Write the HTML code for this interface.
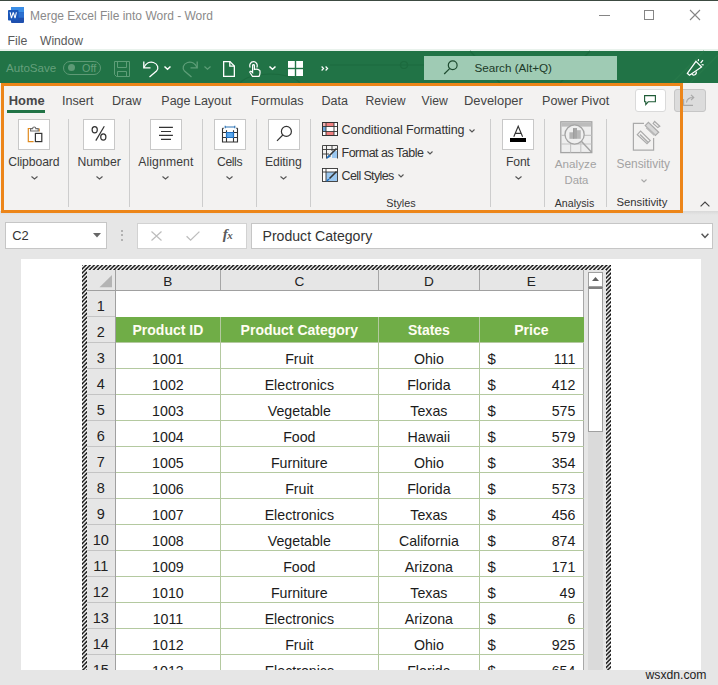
<!DOCTYPE html>
<html><head><meta charset="utf-8">
<style>
*{margin:0;padding:0;box-sizing:border-box}
html,body{width:718px;height:685px;overflow:hidden;background:#e6e6e6;font-family:"Liberation Sans",sans-serif}
.a{position:absolute}
.t{position:absolute;white-space:nowrap;line-height:1}
svg{position:absolute;overflow:visible}
</style></head><body>
<!-- title bar -->
<div class="a" style="left:0;top:0;width:718px;height:51px;background:#fff"></div>
<div class="a" style="left:0;top:0;width:718px;height:1px;background:#3c4a41"></div>
<div class="a" style="left:0;top:49px;width:718px;height:2px;background:#e9f2ec"></div>
<!-- word icon -->
<svg style="left:8px;top:7px" width="16" height="16" viewBox="0 0 16 16">
 <rect x="3" y="0" width="13" height="16" rx="1" fill="#1e4fae"/>
 <rect x="3" y="0" width="13" height="5.3" fill="#3a8ee6"/>
 <rect x="3" y="5.3" width="13" height="5.4" fill="#2b6fd0"/>
 <rect x="0" y="3" width="10.5" height="10.5" rx="0.8" fill="#1a56b8"/>
 <path d="M1.6 5.3L2.9 11.2H4L5.25 6.9L6.5 11.2H7.6L8.9 5.3H7.8L7 9.2L5.8 5.3H4.7L3.5 9.2L2.7 5.3Z" fill="#fff"/>
</svg>
<div class="t" style="left:30px;top:9.8px;font-size:12px;color:#8a8a8a">Merge Excel File into Word - Word</div>
<div class="t" style="left:7.5px;top:34.8px;font-size:12.3px;color:#5a5a5a">File</div>
<div class="t" style="left:40px;top:34.8px;font-size:12.1px;color:#5a5a5a">Window</div>
<!-- window controls -->
<div class="a" style="left:599px;top:15px;width:11px;height:1px;background:#858585"></div>
<div class="a" style="left:644px;top:10px;width:10px;height:10px;border:1px solid #858585"></div>
<svg style="left:690px;top:10px" width="10" height="10"><path d="M0 0L10 10M10 0L0 10" stroke="#858585" stroke-width="1.1"/></svg>


<!-- green toolbar -->
<div class="a" style="left:0;top:51px;width:718px;height:32px;background:#217346"></div>
<svg style="left:0;top:51px" width="718" height="32" viewBox="0 0 718 32" fill="none" stroke="#1c6a3e" stroke-width="1.2">
 <path d="M330 14H424"/><circle cx="404" cy="14" r="3.5"/><path d="M240 32C250 20 290 20 300 32" />
 <path d="M470 0L500 32M560 32L590 0"/><path d="M672 32L704 0M690 32L718 4" stroke="#267849" stroke-width="1.6"/>
</svg>
<div class="t" style="left:6px;top:62.3px;font-size:11.6px;color:#65a07c">AutoSave</div>
<div class="a" style="left:63px;top:60.5px;width:38px;height:14px;border:1.2px solid #5e9a76;border-radius:7px"></div>
<div class="a" style="left:67.5px;top:63.5px;width:7.5px;height:7.5px;background:#5e9a76;border-radius:50%"></div>
<div class="t" style="left:82px;top:63.3px;font-size:10.8px;color:#65a07c">Off</div>
<svg style="left:114px;top:61px" width="16" height="16" viewBox="0 0 16 16" fill="none" stroke="#5e9e78" stroke-width="1">
 <path d="M0.5 0.5H15.5V15.5H2.5L0.5 13.5Z"/><path d="M3.5 0.5V6.5H12.5V0.5"/><path d="M3.5 15.5V10.5H12.5V15.5"/>
</svg>
<svg style="left:142px;top:60px" width="18" height="18" viewBox="0 0 18 18" fill="none" stroke="#fff" stroke-width="1.3">
 <path d="M1.8 1.5V7.8H8.5"/><path d="M2 7.5C4 3 8 1.5 11.5 2.5C16 4 17 8.5 14.5 11L7.5 17"/>
</svg>
<svg style="left:164px;top:65.5px" width="7" height="4" viewBox="0 0 7 4"><path d="M0.5 0.5L3.5 3.2L6.5 0.5" stroke="#fff" stroke-width="1.5" fill="none"/></svg>
<svg style="left:182px;top:60px" width="18" height="18" viewBox="0 0 18 18" fill="none" stroke="#5e9e78" stroke-width="1.3">
 <path d="M15.2 1.5V7.8H8.5"/><path d="M15 7.5C13 3 9 1.5 5.5 2.5C1 4 0 8.5 2.5 11L9.5 17"/>
</svg>
<svg style="left:203.5px;top:65.5px" width="7" height="4" viewBox="0 0 7 4"><path d="M0.5 0.5L3.5 3.2L6.5 0.5" stroke="#5e9e78" stroke-width="1.2" fill="none"/></svg>
<svg style="left:223px;top:61px" width="12" height="16" viewBox="0 0 12 16" fill="none" stroke="#fff" stroke-width="1.3">
 <path d="M0.65 0.65H7L11.35 5V15.35H0.65Z"/><path d="M6.8 0.65V5.2H11.35"/>
</svg>
<svg style="left:249px;top:61px" width="12" height="16" viewBox="0 0 12 16" fill="none" stroke="#fff" stroke-width="1.2">
 <path d="M1.2 6.5C0 4 1.5 0.6 4.5 0.6C7.5 0.6 9 4 7.8 6.5"/><path d="M3.5 15.4L1 11.5C0.5 10.6 1.6 9.8 2.4 10.5L3.6 11.6V4.5C3.6 3.4 5.4 3.4 5.4 4.5V8.5C6.8 8 9 8.3 10.8 9.5C11.2 11 11 13.5 10 15.4Z"/>
</svg>
<svg style="left:269px;top:65.5px" width="7" height="4" viewBox="0 0 7 4"><path d="M0.5 0.5L3.5 3.2L6.5 0.5" stroke="#fff" stroke-width="1.5" fill="none"/></svg>
<svg style="left:288px;top:61px" width="15" height="15" viewBox="0 0 15 15" fill="#fff">
 <rect x="0" y="0" width="6.8" height="6.8"/><rect x="8.2" y="0" width="6.8" height="6.8"/><rect x="0" y="8.2" width="6.8" height="6.8"/><rect x="8.2" y="8.2" width="6.8" height="6.8"/>
</svg>
<svg style="left:320.5px;top:66px" width="9" height="5" viewBox="0 0 9 5" fill="none" stroke="#fff" stroke-width="1.2"><path d="M0.6 0.5L2.6 2.5L0.6 4.5M4.6 0.5L6.6 2.5L4.6 4.5"/></svg>
<!-- search box -->
<div class="a" style="left:424px;top:56px;width:193px;height:24px;background:#9fcbb4"></div>
<svg style="left:443px;top:60px" width="16" height="16" viewBox="0 0 16 16" fill="none" stroke="#1d4a2f" stroke-width="1.2">
 <circle cx="9.7" cy="5.3" r="4.4"/><path d="M6.6 8.6L1.2 14"/>
</svg>
<div class="t" style="left:474.4px;top:62.1px;font-size:11.7px;color:#1c3a28">Search (Alt+Q)</div>
<svg style="left:684px;top:58px" width="22" height="20" viewBox="0 0 22 20" fill="none" stroke="#fff" stroke-width="1.2">
 <path d="M12 3.3L17.6 9L5.5 17.3L3.3 15.3Z"/><path d="M7.8 15.7A2.3 2.3 0 0 0 12 13.6"/><path d="M14.2 3.2L14.6 1.2M16.6 5L19 2.2M17.6 6.7L19.7 6.8"/>
</svg>


<!-- formula bar -->
<div class="a" style="left:5px;top:222px;width:102px;height:26.5px;background:#fff;border:1px solid #c6c6c6"></div>
<div class="t" style="left:12.3px;top:229.88px;font-size:12.9px;color:#333;">C2</div>
<svg style="left:92.5px;top:232.5px" width="8" height="5" viewBox="0 0 8 5"><path d="M0 0H8L4 4.5Z" fill="#666"/></svg>
<div class="a" style="left:121px;top:229.5px;width:2px;height:2px;background:#a0a0a0;border-radius:1px"></div>
<div class="a" style="left:121px;top:234px;width:2px;height:2px;background:#a0a0a0;border-radius:1px"></div>
<div class="a" style="left:121px;top:238.5px;width:2px;height:2px;background:#a0a0a0;border-radius:1px"></div>
<div class="a" style="left:137px;top:222.5px;width:110px;height:26px;background:#fff;border:1px solid #d2d2d2"></div>
<svg style="left:150.5px;top:230.5px" width="11" height="10" viewBox="0 0 11 10"><path d="M0.5 0.5L10.5 9.5M10.5 0.5L0.5 9.5" stroke="#bdbdbd" stroke-width="1.2"/></svg>
<svg style="left:185.5px;top:230.5px" width="14" height="10" viewBox="0 0 14 10"><path d="M0.6 5.2L4.6 9.2L13.4 0.6" stroke="#bdbdbd" stroke-width="1.3" fill="none"/></svg>
<div class="t" style="left:222.8px;top:226.8px;font-family:'Liberation Serif',serif;font-style:italic;font-weight:bold;font-size:15px;color:#5a5a5a">f<span style="font-size:11px;position:relative;left:-0.5px;top:0.5px">x</span></div>
<div class="a" style="left:250.5px;top:222.5px;width:462px;height:26px;background:#fff;border:1px solid #c6c6c6"></div>
<div class="t" style="left:262.5px;top:229.26px;font-size:14.1px;color:#333;">Product Category</div>
<svg style="left:701px;top:232.5px" width="8" height="6" viewBox="0 0 8 6"><path d="M0.6 0.8L4 4.4L7.4 0.8" stroke="#555" stroke-width="1.5" fill="none"/></svg>

<!-- page -->
<div class="a" style="left:20.5px;top:258.5px;width:680.5px;height:411.2px;background:#fff;overflow:hidden">
<div class="a" style="left:-20.5px;top:-258.5px;width:718px;height:685px">
<svg style="left:82px;top:265px" width="529" height="420" viewBox="0 0 529 420"><defs><pattern id="h" patternUnits="userSpaceOnUse" width="4.1" height="4.1"><rect width="4.1" height="4.1" fill="#fff"/><path d="M-1 1.05L1.05 -1M0 4.1L4.1 0M3.05 5.1L5.1 3.05" stroke="#000" stroke-width="1.35"/></pattern></defs><rect width="529" height="420" fill="url(#h)"/></svg>
<div class="a" style="left:87px;top:270px;width:519px;height:420px;background:#e6e6e6"></div>
<div class="a" style="left:115.5px;top:290.5px;width:468px;height:400px;background:#fff"></div>
<div class="t" style="left:115.5px;top:275.49px;width:104.80000000000001px;text-align:center;font-size:13.6px;color:#222">B</div>
<div class="t" style="left:220.3px;top:275.49px;width:158.09999999999997px;text-align:center;font-size:13.6px;color:#222">C</div>
<div class="t" style="left:378.4px;top:275.49px;width:101.0px;text-align:center;font-size:13.6px;color:#222">D</div>
<div class="t" style="left:479.4px;top:275.49px;width:104.0px;text-align:center;font-size:13.6px;color:#222">E</div>
<div class="a" style="left:219.8px;top:270px;width:1px;height:20.5px;background:#a6a6a6"></div>
<div class="a" style="left:377.9px;top:270px;width:1px;height:20.5px;background:#a6a6a6"></div>
<div class="a" style="left:478.9px;top:270px;width:1px;height:20.5px;background:#a6a6a6"></div>
<div class="a" style="left:87px;top:290px;width:497px;height:1px;background:#a0a0a0"></div>
<div class="a" style="left:115px;top:270px;width:1px;height:420px;background:#a0a0a0"></div>
<div class="a" style="left:583px;top:270px;width:1.2px;height:420px;background:#a8a8a8"></div>
<svg style="left:99px;top:274.5px" width="13" height="13" viewBox="0 0 13 13"><path d="M13 0V12.3H0.5Z" fill="#b4b4b4"/></svg>
<div class="a" style="left:115.5px;top:316.5px;width:468px;height:26px;background:#70ad47"></div>
<div class="t" style="left:86.5px;top:299.43px;width:28.5px;text-align:center;font-size:14.5px;color:#222">1</div>
<div class="t" style="left:86.5px;top:325.43px;width:28.5px;text-align:center;font-size:14.5px;color:#222">2</div>
<div class="a" style="left:87px;top:316.0px;width:28px;height:1px;background:#c4c4c4"></div>
<div class="t" style="left:115.5px;top:323.15px;width:104.80000000000001px;text-align:center;font-size:14px;font-weight:bold;color:#fffdf2">Product ID</div>
<div class="t" style="left:220.3px;top:323.15px;width:158.09999999999997px;text-align:center;font-size:14px;font-weight:bold;color:#fffdf2">Product Category</div>
<div class="t" style="left:378.4px;top:323.15px;width:101.0px;text-align:center;font-size:14px;font-weight:bold;color:#fffdf2">States</div>
<div class="t" style="left:479.4px;top:323.15px;width:104.0px;text-align:center;font-size:14px;font-weight:bold;color:#fffdf2">Price</div>
<div class="t" style="left:86.5px;top:351.43px;width:28.5px;text-align:center;font-size:14.5px;color:#222">3</div>
<div class="a" style="left:87px;top:342.0px;width:28px;height:1px;background:#c4c4c4"></div>
<div class="t" style="left:115.5px;top:351.78px;width:104.80000000000001px;text-align:center;font-size:14.2px;color:#1b1b1b">1001</div>
<div class="t" style="left:220.3px;top:351.78px;width:158.09999999999997px;text-align:center;font-size:14.2px;color:#1b1b1b">Fruit</div>
<div class="t" style="left:378.4px;top:351.78px;width:101.0px;text-align:center;font-size:14.2px;color:#1b1b1b">Ohio</div>
<div class="t" style="left:487.6px;top:351.40px;font-size:15px;color:#1b1b1b">$</div>
<div class="t" style="left:500px;top:351.78px;width:75.3px;text-align:right;font-size:14.2px;color:#1b1b1b">111</div>
<div class="a" style="left:115.5px;top:342.0px;width:468px;height:1px;background:#b4c9a0"></div>
<div class="t" style="left:86.5px;top:377.43px;width:28.5px;text-align:center;font-size:14.5px;color:#222">4</div>
<div class="a" style="left:87px;top:368.0px;width:28px;height:1px;background:#c4c4c4"></div>
<div class="t" style="left:115.5px;top:377.78px;width:104.80000000000001px;text-align:center;font-size:14.2px;color:#1b1b1b">1002</div>
<div class="t" style="left:220.3px;top:377.78px;width:158.09999999999997px;text-align:center;font-size:14.2px;color:#1b1b1b">Electronics</div>
<div class="t" style="left:378.4px;top:377.78px;width:101.0px;text-align:center;font-size:14.2px;color:#1b1b1b">Florida</div>
<div class="t" style="left:487.6px;top:377.40px;font-size:15px;color:#1b1b1b">$</div>
<div class="t" style="left:500px;top:377.78px;width:75.3px;text-align:right;font-size:14.2px;color:#1b1b1b">412</div>
<div class="a" style="left:115.5px;top:368.0px;width:468px;height:1px;background:#b4c9a0"></div>
<div class="t" style="left:86.5px;top:403.43px;width:28.5px;text-align:center;font-size:14.5px;color:#222">5</div>
<div class="a" style="left:87px;top:394.0px;width:28px;height:1px;background:#c4c4c4"></div>
<div class="t" style="left:115.5px;top:403.78px;width:104.80000000000001px;text-align:center;font-size:14.2px;color:#1b1b1b">1003</div>
<div class="t" style="left:220.3px;top:403.78px;width:158.09999999999997px;text-align:center;font-size:14.2px;color:#1b1b1b">Vegetable</div>
<div class="t" style="left:378.4px;top:403.78px;width:101.0px;text-align:center;font-size:14.2px;color:#1b1b1b">Texas</div>
<div class="t" style="left:487.6px;top:403.40px;font-size:15px;color:#1b1b1b">$</div>
<div class="t" style="left:500px;top:403.78px;width:75.3px;text-align:right;font-size:14.2px;color:#1b1b1b">575</div>
<div class="a" style="left:115.5px;top:394.0px;width:468px;height:1px;background:#b4c9a0"></div>
<div class="t" style="left:86.5px;top:429.43px;width:28.5px;text-align:center;font-size:14.5px;color:#222">6</div>
<div class="a" style="left:87px;top:420.0px;width:28px;height:1px;background:#c4c4c4"></div>
<div class="t" style="left:115.5px;top:429.78px;width:104.80000000000001px;text-align:center;font-size:14.2px;color:#1b1b1b">1004</div>
<div class="t" style="left:220.3px;top:429.78px;width:158.09999999999997px;text-align:center;font-size:14.2px;color:#1b1b1b">Food</div>
<div class="t" style="left:378.4px;top:429.78px;width:101.0px;text-align:center;font-size:14.2px;color:#1b1b1b">Hawaii</div>
<div class="t" style="left:487.6px;top:429.40px;font-size:15px;color:#1b1b1b">$</div>
<div class="t" style="left:500px;top:429.78px;width:75.3px;text-align:right;font-size:14.2px;color:#1b1b1b">579</div>
<div class="a" style="left:115.5px;top:420.0px;width:468px;height:1px;background:#b4c9a0"></div>
<div class="t" style="left:86.5px;top:455.43px;width:28.5px;text-align:center;font-size:14.5px;color:#222">7</div>
<div class="a" style="left:87px;top:446.0px;width:28px;height:1px;background:#c4c4c4"></div>
<div class="t" style="left:115.5px;top:455.78px;width:104.80000000000001px;text-align:center;font-size:14.2px;color:#1b1b1b">1005</div>
<div class="t" style="left:220.3px;top:455.78px;width:158.09999999999997px;text-align:center;font-size:14.2px;color:#1b1b1b">Furniture</div>
<div class="t" style="left:378.4px;top:455.78px;width:101.0px;text-align:center;font-size:14.2px;color:#1b1b1b">Ohio</div>
<div class="t" style="left:487.6px;top:455.40px;font-size:15px;color:#1b1b1b">$</div>
<div class="t" style="left:500px;top:455.78px;width:75.3px;text-align:right;font-size:14.2px;color:#1b1b1b">354</div>
<div class="a" style="left:115.5px;top:446.0px;width:468px;height:1px;background:#b4c9a0"></div>
<div class="t" style="left:86.5px;top:481.43px;width:28.5px;text-align:center;font-size:14.5px;color:#222">8</div>
<div class="a" style="left:87px;top:472.0px;width:28px;height:1px;background:#c4c4c4"></div>
<div class="t" style="left:115.5px;top:481.78px;width:104.80000000000001px;text-align:center;font-size:14.2px;color:#1b1b1b">1006</div>
<div class="t" style="left:220.3px;top:481.78px;width:158.09999999999997px;text-align:center;font-size:14.2px;color:#1b1b1b">Fruit</div>
<div class="t" style="left:378.4px;top:481.78px;width:101.0px;text-align:center;font-size:14.2px;color:#1b1b1b">Florida</div>
<div class="t" style="left:487.6px;top:481.40px;font-size:15px;color:#1b1b1b">$</div>
<div class="t" style="left:500px;top:481.78px;width:75.3px;text-align:right;font-size:14.2px;color:#1b1b1b">573</div>
<div class="a" style="left:115.5px;top:472.0px;width:468px;height:1px;background:#b4c9a0"></div>
<div class="t" style="left:86.5px;top:507.43px;width:28.5px;text-align:center;font-size:14.5px;color:#222">9</div>
<div class="a" style="left:87px;top:498.0px;width:28px;height:1px;background:#c4c4c4"></div>
<div class="t" style="left:115.5px;top:507.78px;width:104.80000000000001px;text-align:center;font-size:14.2px;color:#1b1b1b">1007</div>
<div class="t" style="left:220.3px;top:507.78px;width:158.09999999999997px;text-align:center;font-size:14.2px;color:#1b1b1b">Electronics</div>
<div class="t" style="left:378.4px;top:507.78px;width:101.0px;text-align:center;font-size:14.2px;color:#1b1b1b">Texas</div>
<div class="t" style="left:487.6px;top:507.40px;font-size:15px;color:#1b1b1b">$</div>
<div class="t" style="left:500px;top:507.78px;width:75.3px;text-align:right;font-size:14.2px;color:#1b1b1b">456</div>
<div class="a" style="left:115.5px;top:498.0px;width:468px;height:1px;background:#b4c9a0"></div>
<div class="t" style="left:86.5px;top:533.43px;width:28.5px;text-align:center;font-size:14.5px;color:#222">10</div>
<div class="a" style="left:87px;top:524.0px;width:28px;height:1px;background:#c4c4c4"></div>
<div class="t" style="left:115.5px;top:533.78px;width:104.80000000000001px;text-align:center;font-size:14.2px;color:#1b1b1b">1008</div>
<div class="t" style="left:220.3px;top:533.78px;width:158.09999999999997px;text-align:center;font-size:14.2px;color:#1b1b1b">Vegetable</div>
<div class="t" style="left:378.4px;top:533.78px;width:101.0px;text-align:center;font-size:14.2px;color:#1b1b1b">California</div>
<div class="t" style="left:487.6px;top:533.40px;font-size:15px;color:#1b1b1b">$</div>
<div class="t" style="left:500px;top:533.78px;width:75.3px;text-align:right;font-size:14.2px;color:#1b1b1b">874</div>
<div class="a" style="left:115.5px;top:524.0px;width:468px;height:1px;background:#b4c9a0"></div>
<div class="t" style="left:86.5px;top:559.43px;width:28.5px;text-align:center;font-size:14.5px;color:#222">11</div>
<div class="a" style="left:87px;top:550.0px;width:28px;height:1px;background:#c4c4c4"></div>
<div class="t" style="left:115.5px;top:559.78px;width:104.80000000000001px;text-align:center;font-size:14.2px;color:#1b1b1b">1009</div>
<div class="t" style="left:220.3px;top:559.78px;width:158.09999999999997px;text-align:center;font-size:14.2px;color:#1b1b1b">Food</div>
<div class="t" style="left:378.4px;top:559.78px;width:101.0px;text-align:center;font-size:14.2px;color:#1b1b1b">Arizona</div>
<div class="t" style="left:487.6px;top:559.40px;font-size:15px;color:#1b1b1b">$</div>
<div class="t" style="left:500px;top:559.78px;width:75.3px;text-align:right;font-size:14.2px;color:#1b1b1b">171</div>
<div class="a" style="left:115.5px;top:550.0px;width:468px;height:1px;background:#b4c9a0"></div>
<div class="t" style="left:86.5px;top:585.43px;width:28.5px;text-align:center;font-size:14.5px;color:#222">12</div>
<div class="a" style="left:87px;top:576.0px;width:28px;height:1px;background:#c4c4c4"></div>
<div class="t" style="left:115.5px;top:585.78px;width:104.80000000000001px;text-align:center;font-size:14.2px;color:#1b1b1b">1010</div>
<div class="t" style="left:220.3px;top:585.78px;width:158.09999999999997px;text-align:center;font-size:14.2px;color:#1b1b1b">Furniture</div>
<div class="t" style="left:378.4px;top:585.78px;width:101.0px;text-align:center;font-size:14.2px;color:#1b1b1b">Texas</div>
<div class="t" style="left:487.6px;top:585.40px;font-size:15px;color:#1b1b1b">$</div>
<div class="t" style="left:500px;top:585.78px;width:75.3px;text-align:right;font-size:14.2px;color:#1b1b1b">49</div>
<div class="a" style="left:115.5px;top:576.0px;width:468px;height:1px;background:#b4c9a0"></div>
<div class="t" style="left:86.5px;top:611.43px;width:28.5px;text-align:center;font-size:14.5px;color:#222">13</div>
<div class="a" style="left:87px;top:602.0px;width:28px;height:1px;background:#c4c4c4"></div>
<div class="t" style="left:115.5px;top:611.78px;width:104.80000000000001px;text-align:center;font-size:14.2px;color:#1b1b1b">1011</div>
<div class="t" style="left:220.3px;top:611.78px;width:158.09999999999997px;text-align:center;font-size:14.2px;color:#1b1b1b">Electronics</div>
<div class="t" style="left:378.4px;top:611.78px;width:101.0px;text-align:center;font-size:14.2px;color:#1b1b1b">Arizona</div>
<div class="t" style="left:487.6px;top:611.40px;font-size:15px;color:#1b1b1b">$</div>
<div class="t" style="left:500px;top:611.78px;width:75.3px;text-align:right;font-size:14.2px;color:#1b1b1b">6</div>
<div class="a" style="left:115.5px;top:602.0px;width:468px;height:1px;background:#b4c9a0"></div>
<div class="t" style="left:86.5px;top:637.43px;width:28.5px;text-align:center;font-size:14.5px;color:#222">14</div>
<div class="a" style="left:87px;top:628.0px;width:28px;height:1px;background:#c4c4c4"></div>
<div class="t" style="left:115.5px;top:637.78px;width:104.80000000000001px;text-align:center;font-size:14.2px;color:#1b1b1b">1012</div>
<div class="t" style="left:220.3px;top:637.78px;width:158.09999999999997px;text-align:center;font-size:14.2px;color:#1b1b1b">Fruit</div>
<div class="t" style="left:378.4px;top:637.78px;width:101.0px;text-align:center;font-size:14.2px;color:#1b1b1b">Ohio</div>
<div class="t" style="left:487.6px;top:637.40px;font-size:15px;color:#1b1b1b">$</div>
<div class="t" style="left:500px;top:637.78px;width:75.3px;text-align:right;font-size:14.2px;color:#1b1b1b">925</div>
<div class="a" style="left:115.5px;top:628.0px;width:468px;height:1px;background:#b4c9a0"></div>
<div class="t" style="left:86.5px;top:663.43px;width:28.5px;text-align:center;font-size:14.5px;color:#222">15</div>
<div class="a" style="left:87px;top:654.0px;width:28px;height:1px;background:#c4c4c4"></div>
<div class="t" style="left:115.5px;top:663.78px;width:104.80000000000001px;text-align:center;font-size:14.2px;color:#1b1b1b">1013</div>
<div class="t" style="left:220.3px;top:663.78px;width:158.09999999999997px;text-align:center;font-size:14.2px;color:#1b1b1b">Electronics</div>
<div class="t" style="left:378.4px;top:663.78px;width:101.0px;text-align:center;font-size:14.2px;color:#1b1b1b">Florida</div>
<div class="t" style="left:487.6px;top:663.40px;font-size:15px;color:#1b1b1b">$</div>
<div class="t" style="left:500px;top:663.78px;width:75.3px;text-align:right;font-size:14.2px;color:#1b1b1b">654</div>
<div class="a" style="left:115.5px;top:654.0px;width:468px;height:1px;background:#b4c9a0"></div>
<div class="a" style="left:219.8px;top:316.5px;width:1px;height:400px;background:#b4c9a0"></div>
<div class="a" style="left:377.9px;top:316.5px;width:1px;height:400px;background:#b4c9a0"></div>
<div class="a" style="left:478.9px;top:316.5px;width:1px;height:400px;background:#b4c9a0"></div>
<div class="a" style="left:588px;top:287px;width:15px;height:400px;background:#dadada"></div>
<div class="a" style="left:588px;top:272.3px;width:15px;height:15px;background:#fff;border:1px solid #a0a0a0"></div>
<svg style="left:592px;top:277px" width="7" height="4" viewBox="0 0 7 4"><path d="M0 4H7L3.5 0Z" fill="#606060"/></svg>
<div class="a" style="left:588px;top:286.5px;width:15px;height:145px;background:#fff;border:1px solid #a0a0a0;border-top:2px solid #808080"></div>
</div></div>
<div class="t" style="left:645.5px;top:669px;font-size:12.2px;color:#222">wsxdn.com</div>

<!-- ribbon -->
<div class="a" style="left:0;top:83px;width:718px;height:128px;background:#f3f2f1"></div>
<div class="a" style="left:0;top:211px;width:718px;height:4px;background:linear-gradient(#d8d8d8,#e6e6e6)"></div>
<div class="t" style="left:8.8px;top:94.78px;font-size:12.9px;color:#474747;font-weight:bold">Home</div>
<div class="t" style="left:62px;top:95.03px;font-size:12.6px;color:#444;">Insert</div>
<div class="t" style="left:112px;top:95.03px;font-size:12.6px;color:#444;">Draw</div>
<div class="t" style="left:161.3px;top:95.12px;font-size:12.5px;color:#444;">Page Layout</div>
<div class="t" style="left:251px;top:95.03px;font-size:12.6px;color:#444;">Formulas</div>
<div class="t" style="left:321.5px;top:95.12px;font-size:12.5px;color:#444;">Data</div>
<div class="t" style="left:365.5px;top:95.37px;font-size:12.2px;color:#444;">Review</div>
<div class="t" style="left:421.6px;top:95.37px;font-size:12.2px;color:#444;">View</div>
<div class="t" style="left:464px;top:94.78px;font-size:12.9px;color:#444;">Developer</div>
<div class="t" style="left:542px;top:95.03px;font-size:12.6px;color:#444;">Power Pivot</div>
<div class="a" style="left:7px;top:110px;width:38px;height:3px;background:#217346"></div>
<div class="a" style="left:635px;top:88.5px;width:31px;height:23px;background:#fff;border:1px solid #dadada;border-radius:3px"></div>
<svg style="left:644px;top:95px" width="12" height="11" viewBox="0 0 12 11" fill="none" stroke="#1e5b36" stroke-width="1.1"><path d="M0.6 0.6H11.4V6.8H4.2L1.8 9.6V6.8H0.6Z"/></svg>
<div class="a" style="left:674px;top:88.5px;width:32px;height:23px;background:#dcdcdc;border:1px solid #c6c6c6;border-radius:3px"></div>
<svg style="left:683px;top:94px" width="14" height="12" viewBox="0 0 14 12" fill="none" stroke="#a8a8a8" stroke-width="1.1"><path d="M0.6 5V11.4H10"/><path d="M3.5 8.5C4 5 6.5 3.5 10 3.5M8 0.8L10.8 3.5L8 6.2"/></svg>
<div class="a" style="left:18px;top:119px;width:32px;height:31px;background:#fff;border:1px solid #c8c8c8"></div>
<div class="a" style="left:83px;top:119px;width:32px;height:31px;background:#fff;border:1px solid #c8c8c8"></div>
<div class="a" style="left:150px;top:119px;width:32px;height:31px;background:#fff;border:1px solid #c8c8c8"></div>
<div class="a" style="left:214px;top:119px;width:32px;height:31px;background:#fff;border:1px solid #c8c8c8"></div>
<div class="a" style="left:268px;top:119px;width:32px;height:31px;background:#fff;border:1px solid #c8c8c8"></div>
<div class="a" style="left:502px;top:119px;width:32px;height:31px;background:#fff;border:1px solid #c8c8c8"></div>
<svg style="left:18px;top:119px" width="32" height="31" viewBox="0 0 32 31" fill="none">
 <path d="M13 9.5H10.3V22.6H15.6" stroke="#e08a1e" stroke-width="1.2"/><path d="M21.2 9.5V12.6" stroke="#e08a1e" stroke-width="1.2"/>
 <path d="M12.6 12V9.6H14.6C14.6 7.5 17.8 7.5 17.8 9.6H20.2V12Z" stroke="#6b6b6b" stroke-width="1.1"/>
 <rect x="17.4" y="14.4" width="6.4" height="8.2" stroke="#333" stroke-width="1.2"/>
</svg>
<svg style="left:83px;top:119px" width="32" height="31" viewBox="0 0 32 31" fill="none" stroke="#333" stroke-width="1.2">
 <ellipse cx="11.7" cy="10.8" rx="2.6" ry="3.1"/><ellipse cx="20.3" cy="18" rx="2.6" ry="3.1"/><path d="M21.3 7.2L12.8 21.6"/>
</svg>
<svg style="left:150px;top:119px" width="32" height="31" viewBox="0 0 32 31" fill="none" stroke="#333" stroke-width="1.2">
 <path d="M9 8.4H22.9M11 12.5H21M9 16.4H22.9M11 20.4H21"/>
</svg>
<svg style="left:214px;top:119px" width="32" height="31" viewBox="0 0 32 31" fill="none">
 <rect x="12.5" y="13.5" width="7" height="5" fill="#5aa9f0"/>
 <path d="M8.5 11V23H23.5V11M8.5 13.5H23.5M8.5 18.5H23.5M12.5 11.3V23M19.5 11.3V23M8.5 9.3H9.8M23.5 9.3H22.2M8.5 9.3V11M23.5 9.3V11" stroke="#333" stroke-width="1.1"/>
 <path d="M12.5 13.5H19.5V18.5H12.5Z" stroke="#1f6fc0" stroke-width="1.1"/>
 <path d="M11.2 8H20.8M11.2 6.8V9.3M20.8 6.8V9.3" stroke="#2e75b6" stroke-width="1.1"/>
</svg>
<svg style="left:268px;top:119px" width="32" height="31" viewBox="0 0 32 31" fill="none" stroke="#333" stroke-width="1.2">
 <circle cx="18.4" cy="12.4" r="5"/><path d="M14.8 16L9 21.8"/>
</svg>
<svg style="left:502px;top:119px" width="32" height="31" viewBox="0 0 32 31" fill="none">
 <path d="M11.8 17.8L16.2 7.2L20.6 17.8M13.2 14.4H19.2" stroke="#333" stroke-width="1.1"/>
 <rect x="8" y="19" width="16" height="4" fill="#000"/>
</svg>
<div class="t" style="left:8.2px;top:155.67px;font-size:12.2px;color:#3c3c3c;;letter-spacing:-0.1px">Clipboard</div>
<svg style="left:30.8px;top:176px" width="7" height="4" viewBox="0 0 7 4"><path d="M0.5 0.5L3.5 3L6.5 0.5" stroke="#555" stroke-width="1.1" fill="none"/></svg>
<div class="t" style="left:77.4px;top:155.67px;font-size:12.2px;color:#3c3c3c;">Number</div>
<svg style="left:95.5px;top:176px" width="7" height="4" viewBox="0 0 7 4"><path d="M0.5 0.5L3.5 3L6.5 0.5" stroke="#555" stroke-width="1.1" fill="none"/></svg>
<div class="t" style="left:138.2px;top:155.67px;font-size:12.2px;color:#3c3c3c;;letter-spacing:0.12px">Alignment</div>
<svg style="left:162px;top:176px" width="7" height="4" viewBox="0 0 7 4"><path d="M0.5 0.5L3.5 3L6.5 0.5" stroke="#555" stroke-width="1.1" fill="none"/></svg>
<div class="t" style="left:217px;top:155.67px;font-size:12.2px;color:#3c3c3c;;letter-spacing:-0.4px">Cells</div>
<svg style="left:226px;top:176px" width="7" height="4" viewBox="0 0 7 4"><path d="M0.5 0.5L3.5 3L6.5 0.5" stroke="#555" stroke-width="1.1" fill="none"/></svg>
<div class="t" style="left:265px;top:155.67px;font-size:12.2px;color:#3c3c3c;;letter-spacing:-0.1px">Editing</div>
<svg style="left:280px;top:176px" width="7" height="4" viewBox="0 0 7 4"><path d="M0.5 0.5L3.5 3L6.5 0.5" stroke="#555" stroke-width="1.1" fill="none"/></svg>
<div class="t" style="left:506px;top:155.67px;font-size:12.2px;color:#3c3c3c;;letter-spacing:-0.15px">Font</div>
<svg style="left:515px;top:176px" width="7" height="4" viewBox="0 0 7 4"><path d="M0.5 0.5L3.5 3L6.5 0.5" stroke="#555" stroke-width="1.1" fill="none"/></svg>
<div class="a" style="left:68.0px;top:119px;width:1px;height:88px;background:#cdcdcd"></div>
<div class="a" style="left:129.0px;top:119px;width:1px;height:88px;background:#cdcdcd"></div>
<div class="a" style="left:202.0px;top:119px;width:1px;height:88px;background:#cdcdcd"></div>
<div class="a" style="left:256.0px;top:119px;width:1px;height:88px;background:#cdcdcd"></div>
<div class="a" style="left:309.5px;top:119px;width:1px;height:88px;background:#cdcdcd"></div>
<div class="a" style="left:490.0px;top:119px;width:1px;height:88px;background:#cdcdcd"></div>
<div class="a" style="left:544.0px;top:119px;width:1px;height:88px;background:#cdcdcd"></div>
<div class="a" style="left:606.0px;top:119px;width:1px;height:88px;background:#cdcdcd"></div>
<svg style="left:322px;top:122px" width="16" height="14" viewBox="0 0 16 14">
 <rect x="0.5" y="0.5" width="15" height="13" fill="#fff" stroke="#333"/>
 <rect x="4" y="1" width="8" height="3.3" fill="#f08080"/><rect x="4" y="9.7" width="8" height="3.3" fill="#f08080"/><rect x="1" y="4.8" width="3" height="4.4" fill="#6fa8dc"/><rect x="1" y="1" width="3" height="3.3" fill="#f4b0b0"/>
 <path d="M4 0.5V13.5M12 0.5V13.5M0.5 4.5H15.5M0.5 9.5H15.5" stroke="#333" stroke-width="0.9"/>
</svg>
<svg style="left:322px;top:145px" width="16" height="14" viewBox="0 0 16 14">
 <path d="M0.5 13.5V0.5H15.5V13.5M0.5 4.5H15.5M0.5 9H7M4.5 0.5V13.5M10 0.5V6" stroke="#333" stroke-width="0.9" fill="none"/>
 <path d="M5 13.5L6.5 9.5L9 11.5Z" fill="#2e75b6"/><rect x="10" y="6" width="5" height="7" fill="#9bc7ef"/>
 <path d="M7.5 10.5L14.5 3.5" stroke="#333" stroke-width="1.6"/><path d="M4.5 13.5C5 11 6.2 10.2 7.8 11L5.5 13.5Z" fill="#1f6fc0"/>
</svg>
<svg style="left:322px;top:168px" width="16" height="14" viewBox="0 0 16 14">
 <rect x="0.5" y="0.5" width="15" height="13" fill="#fff" stroke="#333" stroke-width="0.9"/>
 <rect x="4" y="4" width="11" height="9" fill="#9bc7ef"/><path d="M0.5 4H15.5M4 0.5V13.5" stroke="#333" stroke-width="0.9"/>
 <path d="M7.5 10.5L14.5 3.5" stroke="#333" stroke-width="1.6"/><path d="M4.5 13.5C5 11 6.2 10.2 7.8 11L5.5 13.5Z" fill="#1f6fc0"/>
</svg>
<div class="t" style="left:341.5px;top:124.02px;font-size:12.5px;color:#333;;letter-spacing:-0.13px">Conditional Formatting</div>
<svg style="left:469px;top:128.5px" width="6" height="4" viewBox="0 0 6 4"><path d="M0.5 0.5L3.0 3L5.5 0.5" stroke="#555" stroke-width="1.1" fill="none"/></svg>
<div class="t" style="left:341.5px;top:146.82px;font-size:12.5px;color:#333;;letter-spacing:-0.5px">Format as Table</div>
<svg style="left:427px;top:151px" width="6" height="4" viewBox="0 0 6 4"><path d="M0.5 0.5L3.0 3L5.5 0.5" stroke="#555" stroke-width="1.1" fill="none"/></svg>
<div class="t" style="left:341.5px;top:169.72px;font-size:12.5px;color:#333;;letter-spacing:-0.62px">Cell Styles</div>
<svg style="left:397.5px;top:174px" width="6" height="4" viewBox="0 0 6 4"><path d="M0.5 0.5L3.0 3L5.5 0.5" stroke="#555" stroke-width="1.1" fill="none"/></svg>
<div class="t" style="left:386.2px;top:197.86px;font-size:10.8px;color:#333;">Styles</div>
<div class="t" style="left:554.8px;top:198.03px;font-size:10.6px;color:#333;">Analysis</div>
<div class="t" style="left:616.5px;top:197.43px;font-size:11.3px;color:#333;">Sensitivity</div>
<svg style="left:555px;top:117px" width="42" height="42" viewBox="0 0 42 42" fill="none">
 <rect x="5.8" y="4.8" width="31" height="30.8" fill="#eeeeee" stroke="#a4a4a4" stroke-width="1.3"/>
 <rect x="6.4" y="5.4" width="29.8" height="4.2" fill="#bcbcbc"/>
 <path d="M6 18.4H36.5M6 27H36.5M15.6 10V35.5M25.8 10V35.5" stroke="#c4c4c4" stroke-width="1.1"/>
 <circle cx="19.6" cy="17.5" r="9.6" fill="#efefef" stroke="#a4a4a4" stroke-width="1.3"/>
 <path d="M26.6 24.4L36.6 35.2" stroke="#a4a4a4" stroke-width="1.4"/>
 <rect x="14.4" y="15.3" width="3.6" height="6.5" fill="#b4b4b4"/><rect x="18" y="11" width="4" height="10.8" fill="#a8a8a8"/><rect x="22" y="13.2" width="3.8" height="8.6" fill="#b8b8b8"/>
 <path d="M18.6 11.6V21.8" stroke="#999" stroke-width="0.8"/>
</svg>
<svg style="left:628px;top:118px" width="40" height="40" viewBox="0 0 40 40" fill="none" stroke="#aaaaaa" stroke-width="1.2">
 <path d="M16 5.4H5.4V32.2H25.6V20"/>
 <path d="M9.3 16.6L12.6 13.1L22.2 22.5L19 25.7Z"/><path d="M12 16.5L20 24.2" stroke-width="1.4"/>
 <path d="M17.2 7.6L20.4 4.4L30.7 14.3L27.4 17.5Z" fill="#d8d8d8"/><path d="M18.5 9.5L26.5 17" stroke="#b8b8b8" stroke-width="2"/>
 <path d="M25.1 5.5L26.6 3.5L31.8 8.2L29.8 9.6Z"/>
</svg>
<div class="t" style="left:554.8px;top:157.60px;font-size:11.7px;color:#a3a3a3;">Analyze</div>
<div class="t" style="left:564.5px;top:174.93px;font-size:11.3px;color:#a3a3a3;">Data</div>
<div class="t" style="left:616.5px;top:159.13px;font-size:11.9px;color:#a3a3a3;">Sensitivity</div>
<svg style="left:640.5px;top:178.5px" width="6" height="4" viewBox="0 0 6 4"><path d="M0.5 0.5L3.0 3L5.5 0.5" stroke="#a8a8a8" stroke-width="1.1" fill="none"/></svg>
<svg style="left:700px;top:200.8px" width="10" height="6" viewBox="0 0 10 6"><path d="M0.6 5.4L5 1L9.4 5.4" stroke="#444" stroke-width="1.2" fill="none"/></svg>
<div class="a" style="left:1px;top:83px;width:682px;height:130px;border:3px solid #ec8519"></div>
</body></html>
